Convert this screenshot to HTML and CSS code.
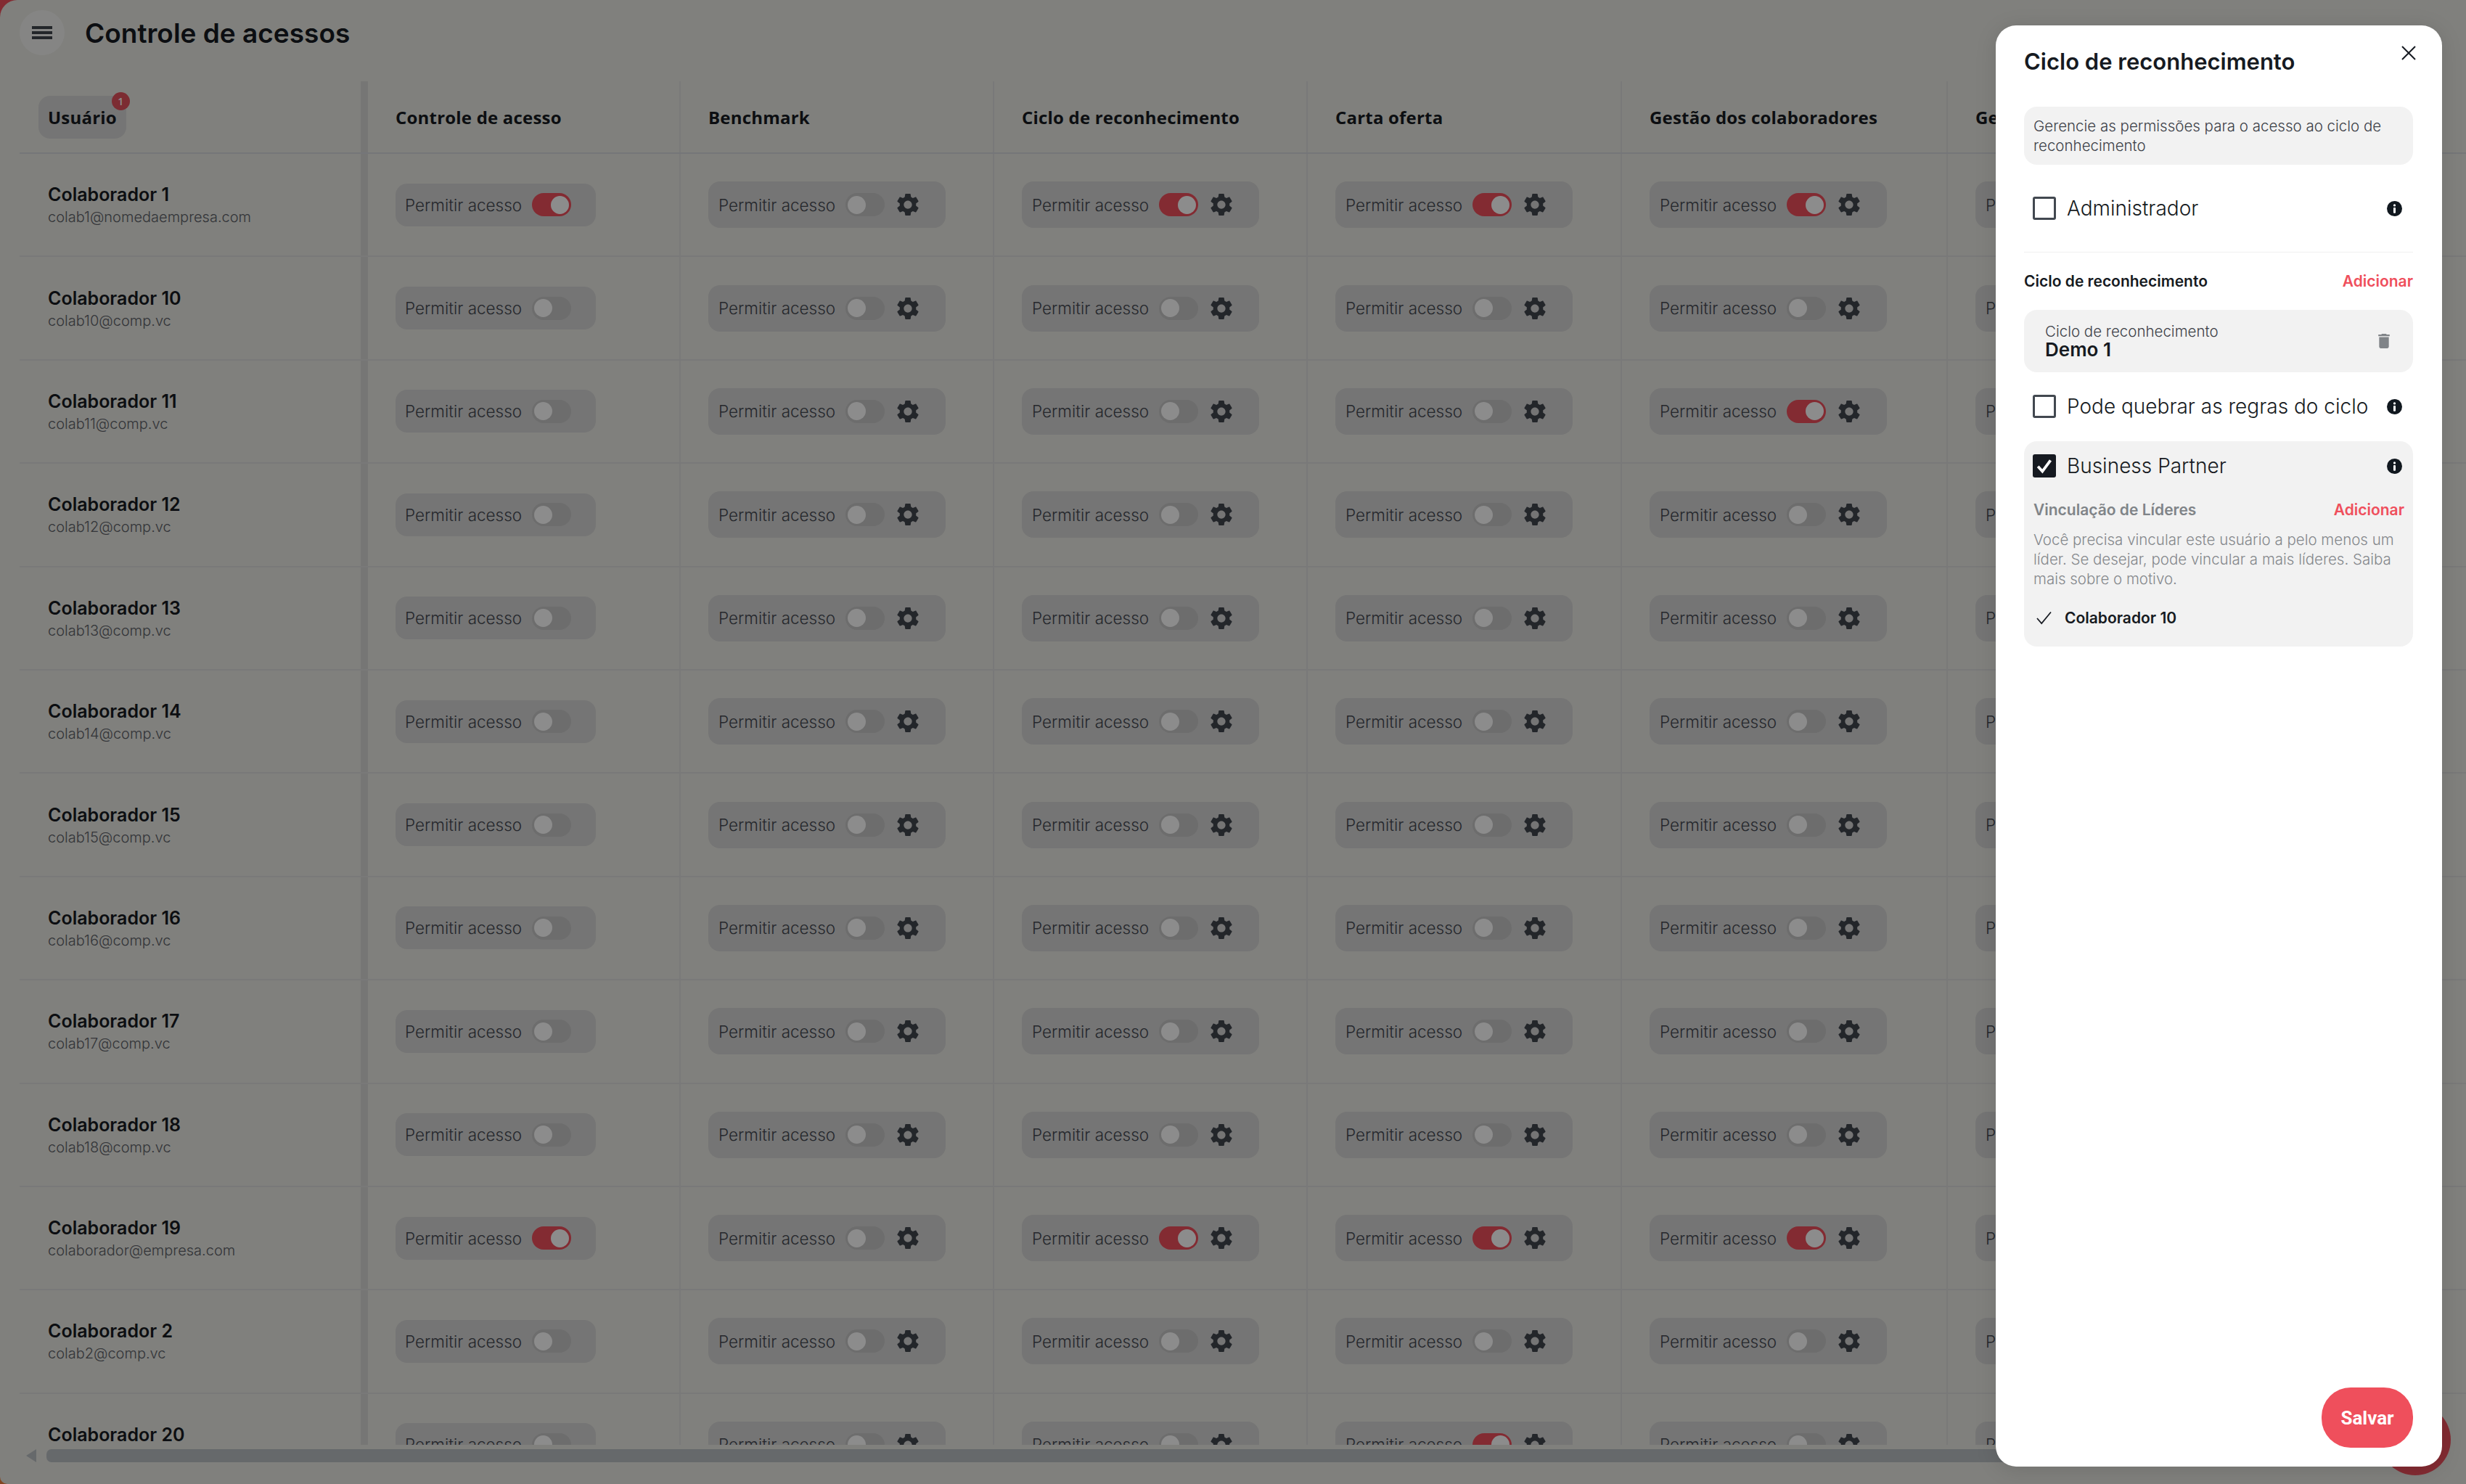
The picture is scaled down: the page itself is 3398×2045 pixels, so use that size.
FILE: index.html
```html
<!DOCTYPE html>
<html lang="pt-BR">
<head>
    <meta charset="UTF-8">
    <meta name="viewport" content="width=device-width, initial-scale=1.0">
    <title>Controle de acessos</title>
    <link rel="stylesheet" href="styles.css">
</head>
<body>

    <svg class="sprite" aria-hidden="true">
        <symbol id="gear" viewBox="2.4 1.8 19.2 20.4">
            <path d="M19.14 12.94c.04-.3.06-.61.06-.94 0-.32-.02-.64-.07-.94l2.03-1.58c.18-.14.23-.41.12-.61l-1.92-3.32c-.12-.22-.37-.29-.59-.22l-2.39.96c-.5-.38-1.03-.7-1.62-.94l-.36-2.54c-.04-.24-.24-.41-.48-.41h-3.84c-.24 0-.43.17-.47.41l-.36 2.54c-.59.24-1.13.57-1.62.94l-2.39-.96c-.22-.08-.47 0-.59.22L2.74 8.87c-.12.21-.08.47.12.61l2.03 1.58c-.05.3-.09.63-.09.94s.02.64.07.94l-2.03 1.58c-.18.14-.23.41-.12.61l1.92 3.32c.12.22.37.29.59.22l2.39-.96c.5.38 1.03.7 1.62.94l.36 2.54c.05.24.24.41.48.41h3.84c.24 0 .44-.17.47-.41l.36-2.54c.59-.24 1.13-.56 1.62-.94l2.39.96c.22.08.47 0 .59-.22l1.92-3.32c.12-.22.07-.47-.12-.61l-2.01-1.58zM12 15.6c-1.98 0-3.6-1.62-3.6-3.6s1.62-3.6 3.6-3.6 3.6 1.62 3.6 3.6-1.62 3.6-3.6 3.6z"/>
        </symbol>
        <symbol id="info" viewBox="0 0 22 22">
            <circle cx="11" cy="11" r="11" fill="#11181f"/>
            <circle cx="11" cy="6.2" r="1.7" fill="#fff"/>
            <rect x="9.4" y="9.4" width="3.2" height="8.2" rx="1" fill="#fff"/>
        </symbol>
    </svg>

    <div class="app">
        <header class="topbar">
            <button class="menu-btn" aria-label="Menu">
                <span></span><span></span><span></span>
            </button>
            <h1>Controle de acessos</h1>
        </header>

        <div class="table-wrap">
            <div class="row row-head">
                <div class="cell cell-user"><span class="sort-pill">Usuário<span class="badge">1</span></span></div>
                <div class="cell">Controle de acesso</div>
                <div class="cell">Benchmark</div>
                <div class="cell">Ciclo de reconhecimento</div>
                <div class="cell">Carta oferta</div>
                <div class="cell">Gestão dos colaboradores</div>
                <div class="cell">Gestão</div>
            </div>

            <div class="row">
                <div class="cell cell-user"><b>Colaborador 1</b><small>colab1@nomedaempresa.com</small></div>
                <div class="cell"><div class="perm perm-plain">Permitir acesso<span class="toggle on"></span></div></div>
                <div class="cell"><div class="perm">Permitir acesso<span class="toggle"></span><svg class="gear"><use href="#gear"/></svg></div></div>
                <div class="cell"><div class="perm">Permitir acesso<span class="toggle on"></span><svg class="gear"><use href="#gear"/></svg></div></div>
                <div class="cell"><div class="perm">Permitir acesso<span class="toggle on"></span><svg class="gear"><use href="#gear"/></svg></div></div>
                <div class="cell"><div class="perm">Permitir acesso<span class="toggle on"></span><svg class="gear"><use href="#gear"/></svg></div></div>
                <div class="cell"><div class="perm">Permitir acesso</div></div>
            </div>
            <div class="row">
                <div class="cell cell-user"><b>Colaborador 10</b><small>colab10@comp.vc</small></div>
                <div class="cell"><div class="perm perm-plain">Permitir acesso<span class="toggle"></span></div></div>
                <div class="cell"><div class="perm">Permitir acesso<span class="toggle"></span><svg class="gear"><use href="#gear"/></svg></div></div>
                <div class="cell"><div class="perm">Permitir acesso<span class="toggle"></span><svg class="gear"><use href="#gear"/></svg></div></div>
                <div class="cell"><div class="perm">Permitir acesso<span class="toggle"></span><svg class="gear"><use href="#gear"/></svg></div></div>
                <div class="cell"><div class="perm">Permitir acesso<span class="toggle"></span><svg class="gear"><use href="#gear"/></svg></div></div>
                <div class="cell"><div class="perm">Permitir acesso</div></div>
            </div>
            <div class="row">
                <div class="cell cell-user"><b>Colaborador 11</b><small>colab11@comp.vc</small></div>
                <div class="cell"><div class="perm perm-plain">Permitir acesso<span class="toggle"></span></div></div>
                <div class="cell"><div class="perm">Permitir acesso<span class="toggle"></span><svg class="gear"><use href="#gear"/></svg></div></div>
                <div class="cell"><div class="perm">Permitir acesso<span class="toggle"></span><svg class="gear"><use href="#gear"/></svg></div></div>
                <div class="cell"><div class="perm">Permitir acesso<span class="toggle"></span><svg class="gear"><use href="#gear"/></svg></div></div>
                <div class="cell"><div class="perm">Permitir acesso<span class="toggle on"></span><svg class="gear"><use href="#gear"/></svg></div></div>
                <div class="cell"><div class="perm">Permitir acesso</div></div>
            </div>
            <div class="row">
                <div class="cell cell-user"><b>Colaborador 12</b><small>colab12@comp.vc</small></div>
                <div class="cell"><div class="perm perm-plain">Permitir acesso<span class="toggle"></span></div></div>
                <div class="cell"><div class="perm">Permitir acesso<span class="toggle"></span><svg class="gear"><use href="#gear"/></svg></div></div>
                <div class="cell"><div class="perm">Permitir acesso<span class="toggle"></span><svg class="gear"><use href="#gear"/></svg></div></div>
                <div class="cell"><div class="perm">Permitir acesso<span class="toggle"></span><svg class="gear"><use href="#gear"/></svg></div></div>
                <div class="cell"><div class="perm">Permitir acesso<span class="toggle"></span><svg class="gear"><use href="#gear"/></svg></div></div>
                <div class="cell"><div class="perm">Permitir acesso</div></div>
            </div>
            <div class="row">
                <div class="cell cell-user"><b>Colaborador 13</b><small>colab13@comp.vc</small></div>
                <div class="cell"><div class="perm perm-plain">Permitir acesso<span class="toggle"></span></div></div>
                <div class="cell"><div class="perm">Permitir acesso<span class="toggle"></span><svg class="gear"><use href="#gear"/></svg></div></div>
                <div class="cell"><div class="perm">Permitir acesso<span class="toggle"></span><svg class="gear"><use href="#gear"/></svg></div></div>
                <div class="cell"><div class="perm">Permitir acesso<span class="toggle"></span><svg class="gear"><use href="#gear"/></svg></div></div>
                <div class="cell"><div class="perm">Permitir acesso<span class="toggle"></span><svg class="gear"><use href="#gear"/></svg></div></div>
                <div class="cell"><div class="perm">Permitir acesso</div></div>
            </div>
            <div class="row">
                <div class="cell cell-user"><b>Colaborador 14</b><small>colab14@comp.vc</small></div>
                <div class="cell"><div class="perm perm-plain">Permitir acesso<span class="toggle"></span></div></div>
                <div class="cell"><div class="perm">Permitir acesso<span class="toggle"></span><svg class="gear"><use href="#gear"/></svg></div></div>
                <div class="cell"><div class="perm">Permitir acesso<span class="toggle"></span><svg class="gear"><use href="#gear"/></svg></div></div>
                <div class="cell"><div class="perm">Permitir acesso<span class="toggle"></span><svg class="gear"><use href="#gear"/></svg></div></div>
                <div class="cell"><div class="perm">Permitir acesso<span class="toggle"></span><svg class="gear"><use href="#gear"/></svg></div></div>
                <div class="cell"><div class="perm">Permitir acesso</div></div>
            </div>
            <div class="row">
                <div class="cell cell-user"><b>Colaborador 15</b><small>colab15@comp.vc</small></div>
                <div class="cell"><div class="perm perm-plain">Permitir acesso<span class="toggle"></span></div></div>
                <div class="cell"><div class="perm">Permitir acesso<span class="toggle"></span><svg class="gear"><use href="#gear"/></svg></div></div>
                <div class="cell"><div class="perm">Permitir acesso<span class="toggle"></span><svg class="gear"><use href="#gear"/></svg></div></div>
                <div class="cell"><div class="perm">Permitir acesso<span class="toggle"></span><svg class="gear"><use href="#gear"/></svg></div></div>
                <div class="cell"><div class="perm">Permitir acesso<span class="toggle"></span><svg class="gear"><use href="#gear"/></svg></div></div>
                <div class="cell"><div class="perm">Permitir acesso</div></div>
            </div>
            <div class="row">
                <div class="cell cell-user"><b>Colaborador 16</b><small>colab16@comp.vc</small></div>
                <div class="cell"><div class="perm perm-plain">Permitir acesso<span class="toggle"></span></div></div>
                <div class="cell"><div class="perm">Permitir acesso<span class="toggle"></span><svg class="gear"><use href="#gear"/></svg></div></div>
                <div class="cell"><div class="perm">Permitir acesso<span class="toggle"></span><svg class="gear"><use href="#gear"/></svg></div></div>
                <div class="cell"><div class="perm">Permitir acesso<span class="toggle"></span><svg class="gear"><use href="#gear"/></svg></div></div>
                <div class="cell"><div class="perm">Permitir acesso<span class="toggle"></span><svg class="gear"><use href="#gear"/></svg></div></div>
                <div class="cell"><div class="perm">Permitir acesso</div></div>
            </div>
            <div class="row">
                <div class="cell cell-user"><b>Colaborador 17</b><small>colab17@comp.vc</small></div>
                <div class="cell"><div class="perm perm-plain">Permitir acesso<span class="toggle"></span></div></div>
                <div class="cell"><div class="perm">Permitir acesso<span class="toggle"></span><svg class="gear"><use href="#gear"/></svg></div></div>
                <div class="cell"><div class="perm">Permitir acesso<span class="toggle"></span><svg class="gear"><use href="#gear"/></svg></div></div>
                <div class="cell"><div class="perm">Permitir acesso<span class="toggle"></span><svg class="gear"><use href="#gear"/></svg></div></div>
                <div class="cell"><div class="perm">Permitir acesso<span class="toggle"></span><svg class="gear"><use href="#gear"/></svg></div></div>
                <div class="cell"><div class="perm">Permitir acesso</div></div>
            </div>
            <div class="row">
                <div class="cell cell-user"><b>Colaborador 18</b><small>colab18@comp.vc</small></div>
                <div class="cell"><div class="perm perm-plain">Permitir acesso<span class="toggle"></span></div></div>
                <div class="cell"><div class="perm">Permitir acesso<span class="toggle"></span><svg class="gear"><use href="#gear"/></svg></div></div>
                <div class="cell"><div class="perm">Permitir acesso<span class="toggle"></span><svg class="gear"><use href="#gear"/></svg></div></div>
                <div class="cell"><div class="perm">Permitir acesso<span class="toggle"></span><svg class="gear"><use href="#gear"/></svg></div></div>
                <div class="cell"><div class="perm">Permitir acesso<span class="toggle"></span><svg class="gear"><use href="#gear"/></svg></div></div>
                <div class="cell"><div class="perm">Permitir acesso</div></div>
            </div>
            <div class="row">
                <div class="cell cell-user"><b>Colaborador 19</b><small>colaborador@empresa.com</small></div>
                <div class="cell"><div class="perm perm-plain">Permitir acesso<span class="toggle on"></span></div></div>
                <div class="cell"><div class="perm">Permitir acesso<span class="toggle"></span><svg class="gear"><use href="#gear"/></svg></div></div>
                <div class="cell"><div class="perm">Permitir acesso<span class="toggle on"></span><svg class="gear"><use href="#gear"/></svg></div></div>
                <div class="cell"><div class="perm">Permitir acesso<span class="toggle on"></span><svg class="gear"><use href="#gear"/></svg></div></div>
                <div class="cell"><div class="perm">Permitir acesso<span class="toggle on"></span><svg class="gear"><use href="#gear"/></svg></div></div>
                <div class="cell"><div class="perm">Permitir acesso</div></div>
            </div>
            <div class="row">
                <div class="cell cell-user"><b>Colaborador 2</b><small>colab2@comp.vc</small></div>
                <div class="cell"><div class="perm perm-plain">Permitir acesso<span class="toggle"></span></div></div>
                <div class="cell"><div class="perm">Permitir acesso<span class="toggle"></span><svg class="gear"><use href="#gear"/></svg></div></div>
                <div class="cell"><div class="perm">Permitir acesso<span class="toggle"></span><svg class="gear"><use href="#gear"/></svg></div></div>
                <div class="cell"><div class="perm">Permitir acesso<span class="toggle"></span><svg class="gear"><use href="#gear"/></svg></div></div>
                <div class="cell"><div class="perm">Permitir acesso<span class="toggle"></span><svg class="gear"><use href="#gear"/></svg></div></div>
                <div class="cell"><div class="perm">Permitir acesso</div></div>
            </div>
            <div class="row">
                <div class="cell cell-user"><b>Colaborador 20</b><small>colab20@comp.vc</small></div>
                <div class="cell"><div class="perm perm-plain">Permitir acesso<span class="toggle"></span></div></div>
                <div class="cell"><div class="perm">Permitir acesso<span class="toggle"></span><svg class="gear"><use href="#gear"/></svg></div></div>
                <div class="cell"><div class="perm">Permitir acesso<span class="toggle"></span><svg class="gear"><use href="#gear"/></svg></div></div>
                <div class="cell"><div class="perm">Permitir acesso<span class="toggle on"></span><svg class="gear"><use href="#gear"/></svg></div></div>
                <div class="cell"><div class="perm">Permitir acesso<span class="toggle"></span><svg class="gear"><use href="#gear"/></svg></div></div>
                <div class="cell"><div class="perm">Permitir acesso</div></div>
            </div>
        </div>

        <div class="scrollbar">
            <span class="scroll-arrow"></span>
            <span class="scroll-thumb"></span>
        </div>
    </div>

    <span class="fab"></span>
    <div class="overlay"></div>

    <aside class="modal">
        <h2>Ciclo de reconhecimento</h2>
        <button class="close-btn" aria-label="Fechar">
            <svg viewBox="0 0 20 20"><path d="M1 1l18 18M19 1L1 19"/></svg>
        </button>

        <p class="desc">Gerencie as permissões para o acesso ao ciclo de reconhecimento</p>

        <div class="check-row check-admin">
            <span class="checkbox"></span>
            <span class="check-label">Administrador</span>
            <svg class="info"><use href="#info"/></svg>
        </div>

        <hr class="divider">

        <div class="section-head">
            <span>Ciclo de reconhecimento</span>
            <a class="add-link">Adicionar</a>
        </div>

        <div class="cycle-card">
            <div>
                <div class="cycle-label">Ciclo de reconhecimento</div>
                <div class="cycle-name">Demo 1</div>
            </div>
            <svg class="trash" viewBox="5 3 14 18"><path d="M6 19c0 1.1.9 2 2 2h8c1.1 0 2-.9 2-2V7H6v12zM19 4h-3.5l-1-1h-5l-1 1H5v2h14V4z"/></svg>
        </div>

        <div class="check-row check-rules">
            <span class="checkbox"></span>
            <span class="check-label">Pode quebrar as regras do ciclo</span>
            <svg class="info"><use href="#info"/></svg>
        </div>

        <div class="partner-card">
            <div class="check-row">
                <span class="checkbox checked">
                    <svg viewBox="0 0 20 20"><path d="M4.5 10.5l3.8 4.2 7-9.5"/></svg>
                </span>
                <span class="check-label">Business Partner</span>
                <svg class="info"><use href="#info"/></svg>
            </div>
            <div class="section-head leaders-head">
                <span>Vinculação de Líderes</span>
                <a class="add-link">Adicionar</a>
            </div>
            <p class="leaders-text">Você precisa vincular este usuário a pelo menos um líder. Se desejar, pode vincular a mais líderes. Saiba mais sobre o motivo.</p>
            <div class="leader">
                <svg viewBox="0 0 22 20"><path d="M1 10.5l6.5 7.5L21 1.5"/></svg>
                <span>Colaborador 10</span>
            </div>
        </div>

        <div class="modal-footer">
            <button class="save-btn">Salvar</button>
        </div>
    </aside>

</body>
</html>
```

FILE: styles.css
```css
:root {
    --ink: #161a21;
    --red: #ef4f5c;
    --panel: #e9e9e3;
    --pill: #d5d5d5;
    --line: #dcdcdc;
    --band: #d8d8d6;
    --muted: #808488;
}

* {
    box-sizing: border-box;
    margin: 0;
    padding: 0;
}

body {
    position: relative;
    width: 3398px;
    height: 2045px;
    overflow: hidden;
    font-family: 'Inter', 'Liberation Sans', sans-serif;
    color: var(--ink);
    background: linear-gradient(#ef4f5c, #ef7f3c);
}

button {
    border: none;
    background: none;
    font-family: inherit;
}

.sprite {
    display: none;
}

.app {
    display: flex;
    flex-direction: column;
    height: 100%;
    background: var(--panel);
    border-radius: 24px 0 0 10px;
}

/* top bar */
.topbar {
    display: flex;
    align-items: center;
    gap: 28px;
    height: 112px;
    padding: 0 0 22px 27px;
    flex-shrink: 0;
}

.topbar h1 {
    font-size: 37px;
    font-weight: 600;
}

.menu-btn {
    display: flex;
    flex-direction: column;
    align-items: center;
    justify-content: center;
    gap: 3px;
    width: 62px;
    height: 62px;
    border-radius: 50%;
    background: #f3f3f1;
}

.menu-btn span {
    display: block;
    width: 28px;
    height: 4px;
    background: #40454e;
}

/* table */
.table-wrap {
    height: 1879px;
    overflow: hidden;
    flex-shrink: 0;
    padding-left: 27px;
}

.row {
    display: grid;
    grid-template-columns: 480px 431px 432px 432px 433px 449px 500px;
    height: 142.4px;
    border-bottom: 2px solid var(--line);
}

.row-head {
    height: 100px;
    border-bottom-color: #d6d7dc;
    font-family: 'Open Sans', 'Liberation Sans', sans-serif;
    font-size: 24px;
    font-weight: 700;
    letter-spacing: 0.2px;
}

.cell {
    display: flex;
    align-items: center;
    padding-left: 38px;
    border-right: 2px solid var(--line);
}

.cell-user {
    flex-direction: column;
    align-items: flex-start;
    justify-content: center;
    padding-left: 39px;
    border-right: 10px solid var(--band);
}

.row-head .cell-user {
    padding-left: 26px;
}

.cell-user b {
    font-size: 25px;
    font-weight: 600;
    line-height: 32px;
}

.cell-user small {
    margin-top: 2px;
    font-size: 20px;
    font-weight: 300;
    line-height: 26px;
    color: #5d6168;
}

.sort-pill {
    position: relative;
    display: flex;
    align-items: center;
    height: 59px;
    padding: 0 13px;
    border-radius: 16px;
    background: var(--pill);
}

.badge {
    position: absolute;
    top: -5px;
    right: -5px;
    display: flex;
    align-items: center;
    justify-content: center;
    width: 25px;
    height: 25px;
    border-radius: 50%;
    background: #e2515c;
    color: #fff;
    font-size: 14px;
    font-weight: 600;
    letter-spacing: 0;
}

.perm {
    display: flex;
    align-items: center;
    width: 327px;
    height: 64px;
    padding-left: 14px;
    border-radius: 16px;
    background: var(--pill);
    font-size: 22.5px;
    font-weight: 300;
    color: #444850;
}

.perm-plain {
    width: 276px;
    height: 59px;
    padding-left: 13px;
}

.toggle {
    display: flex;
    align-items: center;
    width: 54px;
    height: 32px;
    margin-left: 14px;
    padding: 3px;
    border-radius: 16px;
    background: #c6c6c6;
    flex-shrink: 0;
}

.toggle::after {
    content: "";
    width: 25px;
    height: 25px;
    border-radius: 50%;
    background: #fff;
}

.toggle.on {
    justify-content: flex-end;
    background: var(--red);
}

.gear {
    width: 30px;
    height: 32px;
    margin-left: 17px;
    fill: #40454e;
}

/* scrollbar */
.scrollbar {
    display: flex;
    align-items: center;
    gap: 14px;
    height: 24px;
    padding: 6px 0 0 36px;
}

.scroll-arrow {
    width: 0;
    height: 0;
    border-top: 9px solid transparent;
    border-bottom: 9px solid transparent;
    border-right: 14px solid #bbbfc4;
}

.scroll-thumb {
    width: 3000px;
    height: 18px;
    border-radius: 7px;
    background: #bbbfc4;
}

.fab {
    position: absolute;
    left: 3279px;
    top: 1935px;
    width: 98px;
    height: 98px;
    border-radius: 50%;
    background: var(--red);
}

.overlay {
    position: absolute;
    inset: 0;
    background: rgba(0, 0, 0, 0.45);
}

/* modal */
.modal {
    position: absolute;
    left: 2750px;
    top: 35px;
    display: flex;
    flex-direction: column;
    width: 615px;
    height: 1986px;
    padding: 28px 40px 26px 39px;
    border-radius: 28px;
    background: #fff;
    box-shadow: 0 4px 30px rgba(0, 0, 0, 0.12);
}

.modal h2 {
    font-size: 31px;
    font-weight: 600;
    line-height: 44px;
}

.close-btn {
    position: absolute;
    top: 28px;
    right: 36px;
    width: 20px;
    height: 20px;
}

.close-btn svg {
    display: block;
    fill: none;
    stroke: var(--ink);
    stroke-width: 2;
}

.desc {
    margin-top: 40px;
    height: 80px;
    padding: 13px;
    border-radius: 18px;
    background: #f2f2f2;
    font-size: 20.5px;
    font-weight: 300;
    line-height: 27px;
    color: #3c4047;
}

.check-row {
    display: flex;
    align-items: center;
    height: 32px;
    padding: 0 15px 0 12px;
}

.check-admin {
    margin-top: 44px;
}

.check-rules {
    margin-top: 31px;
}

.checkbox {
    display: flex;
    width: 32px;
    height: 32px;
    border: 3px solid #424850;
    border-radius: 3px;
    flex-shrink: 0;
}

.checkbox.checked {
    border: none;
    background: var(--ink);
}

.checkbox svg {
    fill: none;
    stroke: #fff;
    stroke-width: 2.4;
}

.check-label {
    margin-left: 15px;
    font-size: 28px;
    font-weight: 300;
}

.info {
    width: 21px;
    height: 21px;
    margin-left: auto;
    flex-shrink: 0;
}

.divider {
    margin-top: 44px;
    border: none;
    border-top: 1px solid #f0f0f0;
}

.section-head {
    display: flex;
    align-items: center;
    justify-content: space-between;
    margin-top: 26px;
    font-size: 21px;
    font-weight: 600;
    line-height: 28px;
}

.add-link {
    color: var(--red);
    font-weight: 600;
}

.cycle-card {
    display: flex;
    align-items: center;
    justify-content: space-between;
    height: 86px;
    margin-top: 25px;
    padding: 0 32px 0 29px;
    border-radius: 18px;
    background: #f2f2f2;
}

.cycle-label {
    font-size: 20.5px;
    font-weight: 300;
    line-height: 24px;
    color: #3c4047;
}

.cycle-name {
    font-size: 26px;
    font-weight: 600;
    line-height: 26px;
}

.trash {
    width: 16px;
    height: 20px;
    fill: var(--muted);
}

.partner-card {
    margin-top: 32px;
    padding: 18px 0 26px;
    border-radius: 18px;
    background: #f2f2f2;
}

.leaders-head {
    margin-top: 31px;
    padding: 0 12px 0 13px;
    color: var(--muted);
}

.leaders-text {
    margin-top: 13px;
    padding: 0 12px 0 13px;
    font-size: 20.5px;
    font-weight: 300;
    line-height: 27px;
    color: #85888c;
}

.leader {
    display: flex;
    align-items: center;
    gap: 18px;
    height: 28px;
    margin-top: 26px;
    padding-left: 17px;
    font-size: 21px;
    font-weight: 600;
}

.leader svg {
    width: 21px;
    height: 19px;
    fill: none;
    stroke: var(--ink);
    stroke-width: 1.8;
}

.modal-footer {
    display: flex;
    justify-content: flex-end;
    margin-top: auto;
}

.save-btn {
    width: 126px;
    height: 83px;
    border-radius: 40px;
    background: var(--red);
    color: #fff;
    font-family: 'Roboto', sans-serif;
    font-size: 26px;
    font-weight: 700;
}
```
